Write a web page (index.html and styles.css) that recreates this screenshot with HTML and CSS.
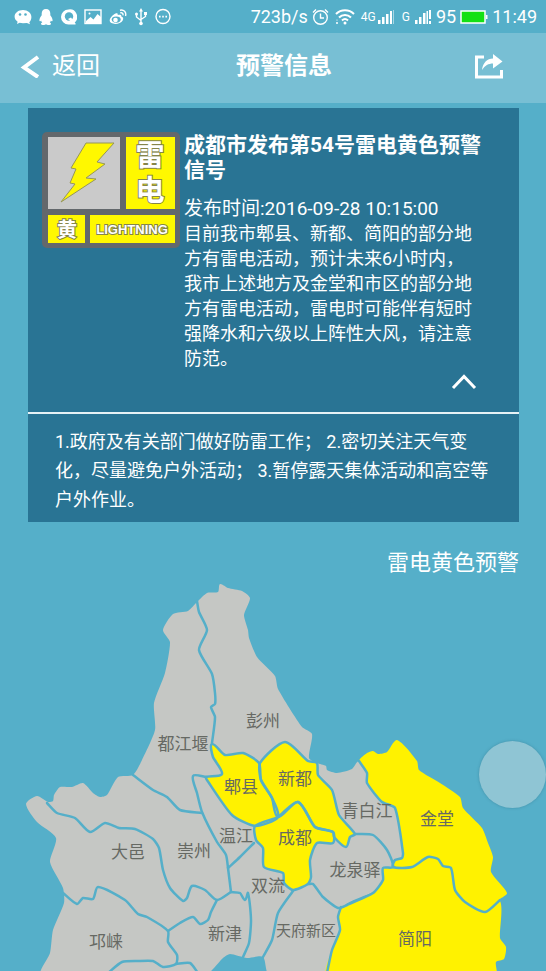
FILE: index.html
```html
<!DOCTYPE html>
<html lang="zh-CN">
<head>
<meta charset="utf-8">
<meta name="viewport" content="width=device-width, initial-scale=1">
<title>预警信息</title>
<link rel="stylesheet" href="styles.css">
</head>
<body>
<div class="status">
  <div class="status-group notices">
    <svg width="18" height="18" viewBox="0 0 18 18"><path class="solid" d="M9 2C4.300 2 .6 4.900.6 8.600c0 2.100 1.100 3.900 3 5.100l-.6 2.300 2.600-1.300c1 .3 2.200.5 3.400.5l3.900-.1 3.100 1.200-.7-2.100c1.300-1.200 2.100-2.900 2.100-5.200C17.400 4.900 13.700 2 9 2z"/><circle class="cut" cx="6" cy="6.500" r="1.300"/><circle class="cut" cx="11.500" cy="6.500" r="1.300"/></svg>
    <svg width="14" height="18" viewBox="0 0 14 18"><path class="solid" d="M7 1C4.200 1 2.700 3 2.700 5.500v1.800C1.500 8.800.3 10.900.4 12.600c.1 1.200 1 .8 1.700-.2.2.9.6 1.600 1.200 2.200-.8.3-1.400.8-1.300 1.400.3 1.300 4 1.200 5 .3 1 .9 4.700 1 5-.3.100-.6-.5-1.100-1.300-1.400.6-.6 1-1.300 1.200-2.200.7 1 1.600 1.400 1.700.2.100-1.700-1.100-3.800-2.300-5.300V5.500C11.300 3 9.800 1 7 1z"/></svg>
    <svg width="17" height="18" viewBox="0 0 17 18"><path class="solid" d="M8.500 1.500a7.500 7.500 0 1 0 0 15H15c1 0 .8-1.200-.3-2A7.500 7.500 0 0 0 8.500 1.500z"/><circle class="cut" cx="9" cy="8.500" r="4.200"/><path class="solid" d="M8 11l3-1.500 3 4-1.500 1.500z"/></svg>
    <svg width="18" height="18" viewBox="0 0 18 18"><rect class="line" x="1" y="2" width="16" height="13.500"/><path class="solid" d="M2 13l4.500-4 3 2.500L13.500 6l3.500 3v6H2z"/><circle class="solid" cx="5.500" cy="5.500" r="1"/></svg>
    <svg width="18" height="18" viewBox="0 0 18 18"><path class="solid" d="M6.500 5.600c1.600-.7 2.600 0 2.200 1.500 2.400-.9 4.100-.3 3.600 1.500 1.900.6 2.400 2.100 1.400 3.900-2.400 4.600-13 4.500-13 .1C.7 10 4 6.700 6.500 5.600z"/><ellipse class="cut" cx="7.200" cy="11.600" rx="4.500" ry="3.100"/><circle class="solid" cx="6.500" cy="12" r="2.300"/><path class="line" d="M11 2.200c3.700-1 6.700 1.900 5.500 5.800M11.300 4.800c1.900-.4 3.100.8 2.600 2.600"/></svg>
    <svg width="14" height="18" viewBox="0 0 14 18"><path class="line" d="M7 3v12M2.500 6.500V9L7 12.500M11.500 5.500V8.500L7 11.500"/><path class="solid" d="M7 0l2 3.500H5z"/><circle class="solid" cx="7" cy="15.500" r="1.800"/><circle class="solid" cx="2.500" cy="6" r="1.500"/><path class="solid" d="M10 4h3v3h-3z"/></svg>
    <svg width="16" height="18" viewBox="0 0 16 18"><circle class="line" cx="8" cy="8.500" r="7"/><path class="solid" d="M4 7.800h1.600v1.600H4zM7.200 7.800h1.600v1.600H7.200zM10.400 7.800H12v1.600h-1.600z"/></svg>
  </div>
  <div class="status-group signals">
    <span>723b/s</span>
    <svg width="17" height="18" viewBox="0 0 17 18"><circle class="line" cx="8.500" cy="9.500" r="6.800"/><path class="line" d="M8.500 5.500v4.500h3.500M1 4.500L4 1.500M16 4.500l-3-3"/></svg>
    <svg class="wifi" width="20" height="18" viewBox="0 0 20 18"><path class="wave" d="M1 6c5-5 13-5 18 0M4 9.500c3.500-3.500 8.500-3.500 12 0M7 12.500c2-2 4-2 6 0"/><circle class="solid" cx="10" cy="15" r="1.500"/><circle class="solid" cx="2" cy="12" r=".6"/><circle class="solid" cx="2" cy="15" r="1"/></svg>
    <span class="network"><small>4G</small><svg width="18" height="16" viewBox="0 0 18 16"><path class="solid" d="M1 11h2.500v4H1zM5 8h2.500v7H5zM9 5h2.500v10H9zM13 2h2v13h-2z"/><path class="dim" d="M16 1h1v14h-1z"/></svg></span>
    <span class="network spaced"><small>G</small><svg width="18" height="16" viewBox="0 0 18 16"><path class="solid" d="M1 11h2.500v4H1zM5 8h2.500v7H5zM9 4h2.500v11H9zM12.500 2H14v13h-1.500zM15 1h2v9h-2zM15 12h2v3h-2z"/></svg></span>
    <span>95</span>
    <svg width="28" height="18" viewBox="0 0 28 18"><rect class="battery" x="1" y="3" width="24" height="12"/><path class="solid" d="M26 7h1.500v4H26z"/></svg>
    <span>11:49</span>
  </div>
</div>
<header class="bar">
  <button class="back" type="button"><svg width="20" height="24" viewBox="0 0 20 24"><path class="arrow" d="M18 3L4 13.500 18 23"/></svg>返回</button>
  <h1>预警信息</h1>
  <button class="share" type="button" aria-label="分享"><svg width="30" height="28" viewBox="0 0 30 28"><path class="tray" d="M10 5H2.500v20h25v-7"/><path class="solid" d="M8 18C9 10.500 13 6.800 19 6.500V2l9.500 7.500-9.500 7v-5C14.500 11.500 11 13.500 8 18z"/></svg></button>
</header>
<main>
  <article class="card">
    <section class="alert">
      <svg class="badge" width="138" height="116" viewBox="0 0 138 116" role="img" aria-label="雷电黄色预警">
        <rect class="frame" width="138" height="116" rx="5"/>
        <path class="plate" d="M6 5h72v72H6z"/>
        <path class="yellow" d="M84 5h49v72H84zM6 83h37v28H6zM48 83h85v28H48z"/>
        <path class="bolt" d="M44 11H72L55 30l8 2-19 14 10 1-35 23 14-18-5-1 6-14-5-1z"/>
        <text class="glyph" x="108" y="34" font-size="29">雷</text>
        <text class="glyph" x="108" y="69" font-size="29">电</text>
        <text class="glyph" x="25" y="105" font-size="20">黄</text>
        <text class="glyph latin" x="90" y="102" font-size="13">LIGHTNING</text>
      </svg>
      <div class="message">
        <h2>成都市发布第54号雷电黄色预警信号</h2>
        <p class="time">发布时间:2016-09-28 10:15:00</p>
        <p class="body">目前我市郫县、新都、简阳的部分地方有雷电活动，预计未来6小时内，我市上述地方及金堂和市区的部分地方有雷电活动，雷电时可能伴有短时强降水和六级以上阵性大风，请注意防范。</p>
      </div>
    </section>
    <button class="toggle" type="button" aria-label="收起"><svg width="26" height="16" viewBox="0 0 26 16"><path class="chevron" d="M2 14L13 2.500 24 14"/></svg></button>
    <p class="advice">1.政府及有关部门做好防雷工作； 2.密切关注天气变化，尽量避免户外活动； 3.暂停露天集体活动和高空等户外作业。</p>
  </article>
  <p class="legend">雷电黄色预警</p>
  <svg class="map" viewBox="0 580 546 391" role="img" aria-label="成都预警地图">
    <g id="shapes"></g>
    <g class="names">
      <text x="263" y="727">彭州</text><text x="183" y="750">都江堰</text>
      <text x="241" y="793">郫县</text><text x="295" y="785">新都</text>
      <text x="295" y="844">成都</text><text x="236" y="842">温江</text>
      <text x="367" y="817">青白江</text><text x="437" y="825">金堂</text>
      <text x="128" y="858">大邑</text><text x="194" y="857">崇州</text>
      <text x="355" y="876">龙泉驿</text><text x="268" y="892">双流</text>
      <text x="106" y="948">邛崃</text><text x="225" y="940">新津</text>
      <text class="small" x="306" y="936">天府新区</text><text x="415" y="945">简阳</text>
    </g>
  </svg>
</main>
<button class="float" type="button" aria-label="快捷菜单"></button>
<script src="map.js"></script>
</body>
</html>
```
FILE: styles.css
```css
* { box-sizing: border-box; }
body {
  margin: 0;
  background: #55afc9;
  color: #fff;
  font-family: Roboto, "Noto Sans CJK SC", sans-serif;
  overflow-x: hidden;
}
h1, h2, p { margin: 0; }
svg { display: block; flex: none; }
button {
  background: none;
  border: 0;
  padding: 0;
  color: inherit;
  font: inherit;
}
.solid { fill: #fff; }
.cut { fill: #55afc9; }
.dim { fill: #a9d7e4; }
.line { fill: none; stroke: #fff; stroke-width: 1.4; }
.wave { fill: none; stroke: #fff; stroke-width: 2; }
.battery { fill: #14e014; stroke: #fff; stroke-width: 1.5; }
.arrow { fill: none; stroke: #fff; stroke-width: 4; }
.tray { fill: none; stroke: #fff; stroke-width: 3; }
.chevron { fill: none; stroke: #fff; stroke-width: 3; }

.status {
  display: flex;
  justify-content: space-between;
  align-items: center;
  height: 33px;
  padding: 0 9px 0 14px;
  font-size: 18px;
}
.status-group { display: flex; align-items: center; }
.notices { gap: 7px; }
.signals { gap: 4px; }
.wifi { margin: 0 2px; }
.network { display: flex; align-items: center; gap: 1px; }
.spaced { gap: 4px; margin-left: 3px; }
.network small { font-size: 12px; }

.bar {
  display: grid;
  grid-template-columns: 1fr auto 1fr;
  align-items: center;
  height: 70px;
  padding: 0 42px 4px 20px;
  background: #78bfd4;
}
.bar h1 { padding-left: 44px; font-size: 24px; line-height: 36px; font-weight: 700; }
.back {
  display: flex;
  align-items: center;
  gap: 12px;
  font-size: 24px;
  line-height: 36px;
}
.share { justify-self: end; }

.card { margin: 5px 27px 0 28px; background: #297494; }
.alert {
  display: flex;
  align-items: flex-start;
  gap: 4px;
  padding: 24px 35px 0 14px;
}
.message { flex: 1; min-width: 0; padding-top: 1px; }
.message h2 { font-size: 21px; line-height: 25px; font-weight: 700; }
.time { margin-top: 14px; font-size: 19px; line-height: 24px; }
.body { padding-right: 8px; font-size: 18px; line-height: 25px; }
.toggle { display: block; margin: 3px 42px 0 auto; padding-bottom: 22px; }
.advice {
  padding: 13px 20px 8px 27px;
  border-top: 2px solid #e6f2f6;
  font-size: 18px;
  line-height: 29px;
}
.legend {
  margin: 24px 27px 0 0;
  font-size: 22px;
  line-height: 34px;
  text-align: right;
}

.frame { fill: #63686c; }
.plate { fill: #cacaca; }
.yellow { fill: #fff800; }
.bolt { fill: #fff800; stroke: #96965a; stroke-width: 1; }
.glyph {
  fill: #fff;
  stroke: #85854a;
  stroke-width: 2;
  paint-order: stroke;
  font-family: "Noto Sans CJK SC", sans-serif;
  font-weight: 700;
  text-anchor: middle;
}
.latin { font-family: "Liberation Sans", sans-serif; }

.map { width: 100%; height: auto; }
.land { fill: #c5c7c4; }
.warned { fill: #fff200; }
.border { fill: none; stroke: #55afc9; stroke-width: 2.5; stroke-linejoin: round; stroke-linecap: round; }
.names { fill: #666963; font-size: 17px; text-anchor: middle; }
.names .small { font-size: 15px; }

.float {
  position: fixed;
  right: 0;
  bottom: 163px;
  width: 67px;
  height: 67px;
  border-radius: 50%;
  background: #8fc5d4;
  box-shadow: 0 0 3px rgba(40, 100, 120, 0.4);
}
```
FILE: map.js
```js
// Each shape is [class, closed, "x,y x,y ..."] in map coordinates.
const shapes = [
  ["land", true, "220,584 228,588 242,591 250,598 244,615 248,630 249,638 257,657 275,676 278,689 302,727 312,734 309,758 317,763 326,766 327,770 337,773 352,769 359,761 390,780 403,853 400,880 345,905 340,930 332,950 327,975 269,975 263,957 247,958 230,954 223,958 205,975 41,975 50,953 53,930 64,903 63,888 50,862 56,838 37,822 26,804 37,796 48,802 53,801 54,795 60,787 72,787 83,783 93,793 100,797 107,795 118,777 133,775 142,760 155,730 154,703 165,673 170,642 163,630 173,614 188,611 197,602 207,593 218,592"],
  ["warned", true, "359,761 367,753 373,751 378,754 387,752 397,740 417,761 419,770 440,783 460,797 463,808 482,828 488,843 493,857 491,872 507,893 500,899 485,912 465,902 455,890 451,868 443,866 438,859 428,857 412,867 393,867 395,860 402,858 403,853 395,808 382,802 367,783 367,773"],
  ["warned", true, "341,907 347,905 373,893 383,880 383,868 393,867 412,867 428,857 438,859 443,866 451,868 455,890 465,902 485,912 500,901 500,938 506,947 504,959 496,962 496,975 327,975 332,950 340,930 338,917"],
  ["warned", true, "212,744 225,755 243,753 259,763 261,780 272,798 278,817 255,826 232,815 207,780 206,777 222,774 213,757"],
  ["warned", true, "260,763 285,742 308,761 317,763 318,775 332,790 339,815 355,834 350,837 346,847 334,837 333,832 315,827 298,802 278,817 272,798 261,780"],
  ["warned", true, "278,817 298,802 315,827 333,832 333,843 317,843 310,860 311,877 308,884 293,890 284,883 283,873 264,867 263,848 256,840 255,826"],
  // 都江堰 / 彭州
  ["border", false, "197,601 199,612 207,630 199,650 212,674 215,693 215,704 211,707 215,717 212,743"],
  // 郫县
  ["border", true, "212,744 225,755 243,753 259,763 261,780 272,798 278,817 255,826 232,815 207,780 206,777 222,774 213,757"],
  // 新都
  ["border", true, "260,763 285,742 308,761 317,763 318,775 332,790 339,815 355,834 350,837 346,847 334,837 333,832 315,827 298,802 278,817 272,798 261,780"],
  // 成都
  ["border", true, "278,817 298,802 315,827 333,832 333,843 317,843 310,860 311,877 308,884 293,890 284,883 283,873 264,867 263,848 256,840 255,826"],
  // 温江
  ["border", false, "206,777 193,776 197,793 202,812 217,842 226,855 228,868 231,892"],
  ["border", false, "228,868 240,857 254,843"],
  ["border", false, "133,775 153,790 167,797 180,810 202,813"],
  // 大邑 / 崇州
  ["border", false, "47,803 57,813 75,818 90,832 105,823 119,828 135,829 153,839 159,848 163,870 170,888 183,901 187,898 192,886 205,890 217,900 231,892"],
  // 新津
  ["border", false, "217,900 211,912 208,920 200,924 193,917 180,923 168,931"],
  ["border", false, "231,892 240,893 245,900 248,893 251,920 249,943 243,957"],
  // 邛崃
  ["border", false, "63,893 77,904 83,898 93,899 98,887 125,900 138,914 147,917 168,931 168,942 177,955 176,964 163,967 153,961 138,961 122,962 108,973"],
  ["border", false, "176,964 190,963 198,973"],
  // 双流 / 天府新区
  ["border", false, "293,891 278,913 272,940 263,957"],
  // 龙泉驿
  ["border", false, "355,834 373,835 387,850 393,867 383,868 383,880 373,893 347,905 338,908 323,897 313,884 308,884"],
  // 青白江 / 金堂 / 简阳
  ["border", false, "359,761 367,773 367,783 382,802 395,808 403,853 402,858 395,860 393,867 412,867 428,857 438,859 443,866 451,868 455,890 465,902 485,912 500,900"],
  ["border", false, "341,907 338,917 340,930 332,950 327,973"]
];

// Joins the points with gently rounded Bézier segments.
function smooth(text, closed) {
  const p = text.split(" ").map(s => s.split(",").map(Number));
  const n = p.length;
  const at = i => closed ? p[(i + n) % n] : p[Math.max(0, Math.min(n - 1, i))];
  let d = "M" + p[0];
  for (let i = 0; i < (closed ? n : n - 1); i++) {
    const [a, b, c, e] = [at(i - 1), at(i), at(i + 1), at(i + 2)];
    const k = Math.hypot(c[0] - b[0], c[1] - b[1]) / 3;
    const l1 = Math.hypot(c[0] - a[0], c[1] - a[1]) || 1;
    const l2 = Math.hypot(e[0] - b[0], e[1] - b[1]) || 1;
    const c1 = [b[0] + (c[0] - a[0]) / l1 * k * 0.6, b[1] + (c[1] - a[1]) / l1 * k * 0.6];
    const c2 = [c[0] - (e[0] - b[0]) / l2 * k * 0.6, c[1] - (e[1] - b[1]) / l2 * k * 0.6];
    d += "C" + c1 + " " + c2 + " " + c;
  }
  return closed ? d + "Z" : d;
}

const group = document.getElementById("shapes");
for (const [name, closed, points] of shapes) {
  const path = document.createElementNS("http://www.w3.org/2000/svg", "path");
  path.setAttribute("class", name);
  path.setAttribute("d", smooth(points, closed));
  group.append(path);
}
```
